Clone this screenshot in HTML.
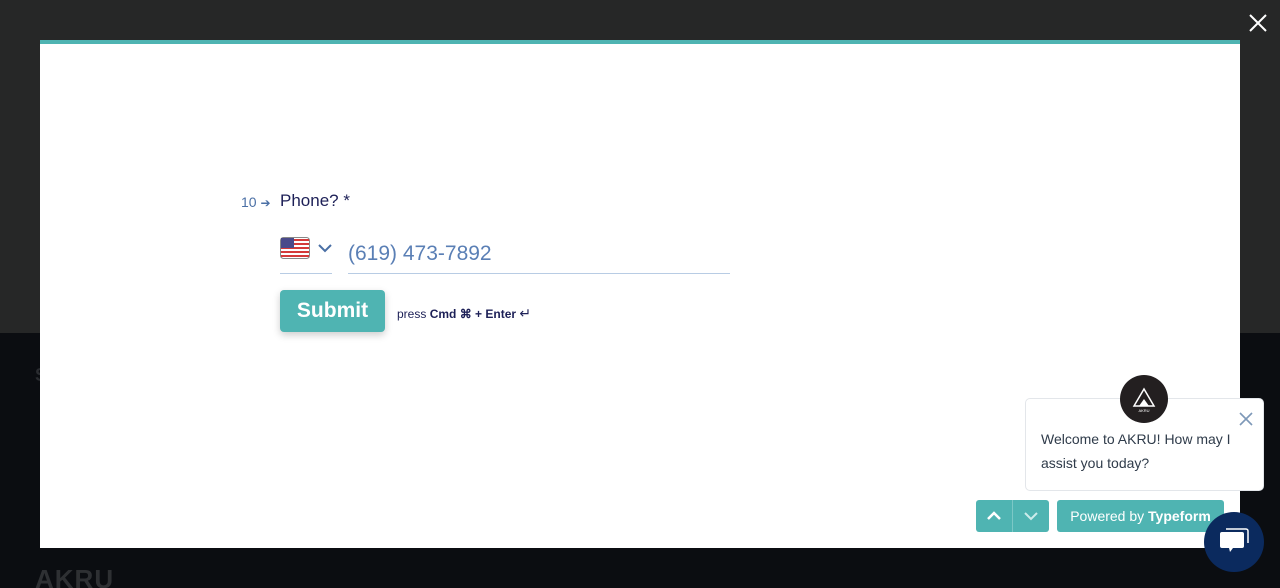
<!DOCTYPE html>
<html style="overflow:hidden;height:588px"><head><style>
html,body{margin:0;width:1280px;height:588px;overflow:hidden}
body{position:relative;font-family:"Liberation Sans",sans-serif;background:#0b0d11}
.top{position:absolute;left:0;top:0;width:1280px;height:333px;background:#262727}
.bot{position:absolute;left:0;top:333px;width:1280px;height:255px;background:#0b0d11}
.modal{position:absolute;left:40px;top:40px;width:1200px;height:508px;background:#fff;border-top:4px solid #4fb4b2;box-sizing:border-box}
.abs{position:absolute}
</style></head><body>
<div class="top"></div><div class="bot"></div>
<div class="abs" style="left:35px;top:564px;color:#2e3033;font-weight:bold;font-size:26px;letter-spacing:1px;line-height:30px">AKRU</div>
<div class="abs" style="left:35px;top:365px;color:#2a2c30;font-weight:bold;font-size:18px">S</div>
<svg class="abs" style="left:1248px;top:13px" width="20" height="20"><path d="M2 2L18 18M18 2L2 18" stroke="#fff" stroke-width="2"/></svg>
<div class="modal">
<div class="abs" style="left:201px;top:150px;font-size:14px;color:#4a6fa5">10 <span style="font-size:12px">➔</span></div>
<div class="abs" style="left:240px;top:147px;font-size:17px;color:#1d2057">Phone? *</div>
<svg class="abs" style="left:240px;top:193px" width="30" height="22"><rect x="0.5" y="0.5" width="29" height="21" rx="3" fill="#fff" stroke="#888"/><g fill="#d43a3a"><rect x="1" y="2" width="28" height="2"/><rect x="1" y="6" width="28" height="2"/><rect x="1" y="10" width="28" height="2"/><rect x="1" y="14" width="28" height="2"/><rect x="1" y="18" width="28" height="2"/></g><rect x="1" y="1" width="13" height="10" fill="#4a4a8a"/></svg>
<svg class="abs" style="left:278px;top:199px" width="14" height="10"><path d="M1 2L7 8L13 2" stroke="#4a6fa5" stroke-width="2" fill="none"/></svg>
<div class="abs" style="left:240px;top:229px;width:52px;height:1px;background:#b8cce4"></div>
<div class="abs" style="left:308px;top:198px;font-size:21px;color:#5a7fb5">(619) 473-7892</div>
<div class="abs" style="left:308px;top:229px;width:382px;height:1px;background:#b8cce4"></div>
<div class="abs" style="left:240px;top:246px;width:105px;height:42px;background:#4fb4b2;border-radius:4px;box-shadow:0 3px 8px rgba(0,0,0,.2);color:#fff;font-weight:bold;font-size:21px;text-align:center;line-height:42px">Submit</div>
<div class="abs" style="left:357px;top:261px;font-size:12px;color:#1d2057">press <b>Cmd ⌘ + Enter</b> <span style="font-size:14px">↵</span></div>
<div class="abs" style="left:936px;top:456px;width:73px;height:32px;background:#4fb4b2;border-radius:3px"></div>
<div class="abs" style="left:972px;top:456px;width:1px;height:32px;background:#7cc8c6"></div>
<svg class="abs" style="left:946px;top:466px" width="16" height="12"><path d="M2 9L8 3L14 9" stroke="#fff" stroke-width="2.5" fill="none"/></svg>
<svg class="abs" style="left:983px;top:466px" width="16" height="12"><path d="M2 3L8 9L14 3" stroke="#cdeceb" stroke-width="2" fill="none"/></svg>
<div class="abs" style="left:1017px;top:456px;width:167px;height:32px;background:#4fb4b2;border-radius:3px;color:#fff;font-size:14px;line-height:32px;text-align:center">Powered by <b>Typeform</b></div>
</div>
<div class="abs" style="left:1025px;top:398px;width:239px;height:93px;background:#fff;border-radius:5px;border:1px solid #e3e6ea;box-sizing:border-box"></div>
<div class="abs" style="left:1041px;top:427px;font-size:14px;line-height:24px;color:#2f3b4a">Welcome to AKRU! How may I<br>assist you today?</div>
<svg class="abs" style="left:1239px;top:412px" width="14" height="14"><path d="M1 1L13 13M13 1L1 13" stroke="#7d98b8" stroke-width="1.6"/></svg>
<div class="abs" style="left:1120px;top:375px;width:48px;height:48px;border-radius:50%;background:#231f20"></div>
<svg class="abs" style="left:1120px;top:375px" width="48" height="48"><path d="M24 14L14 31H34Z" stroke="#fff" stroke-width="1.5" fill="none"/><path d="M24 24L19 31H29Z" fill="#fff"/><text x="24" y="37" font-size="4" fill="#fff" text-anchor="middle" font-family="Liberation Sans">AKRU</text></svg>
<div class="abs" style="left:1204px;top:512px;width:60px;height:60px;border-radius:50%;background:#0b2a5e"></div>
<svg class="abs" style="left:1216px;top:524px" width="36" height="36"><path d="M6 8h20a2 2 0 0 1 2 2v12a2 2 0 0 1-2 2H17l-3 4l-1-4H6a2 2 0 0 1-2-2V10a2 2 0 0 1 2-2z" fill="#fff"/><path d="M10 5h20a2 2 0 0 1 2 2v12" stroke="#fff" stroke-width="1.5" fill="none"/></svg>
</body></html>
